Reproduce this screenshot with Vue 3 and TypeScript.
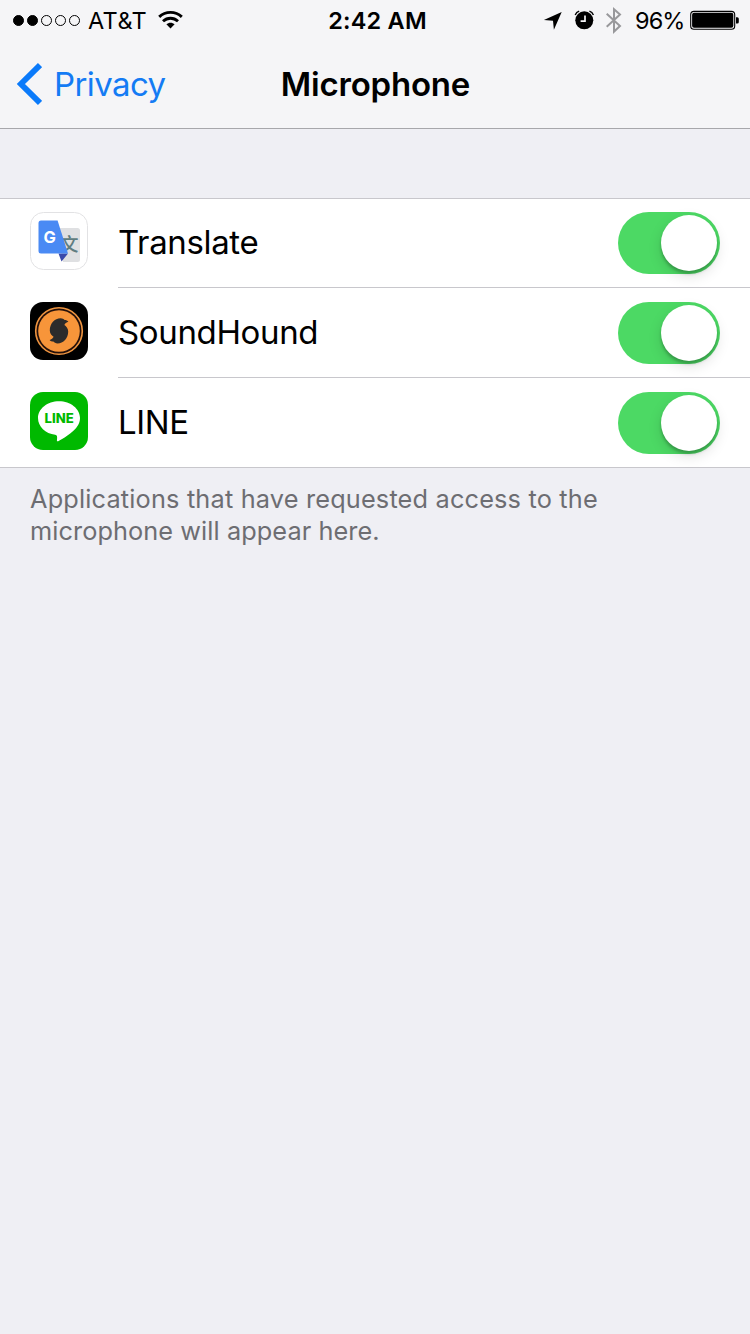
<script setup lang="ts">
import { ref } from 'vue'

type AppId = 'translate' | 'soundhound' | 'line'
interface AppEntry {
  id: AppId
  name: string
  enabled: boolean
}

const apps = ref<AppEntry[]>([
  { id: 'translate', name: 'Translate', enabled: true },
  { id: 'soundhound', name: 'SoundHound', enabled: true },
  { id: 'line', name: 'LINE', enabled: true },
])

const signalStrength = 2
</script>

<template>
  <div class="screen">
    <header class="top">
      <div class="status">
        <div class="status-left">
          <div class="signal">
            <i v-for="n in 5" :key="n" class="dot" :class="{ full: n <= signalStrength }"></i>
          </div>
          <span class="carrier">AT&amp;T</span>
          <svg class="wifi" width="26" height="20" viewBox="0 0 26 20">
            <g fill="none" stroke="#000" stroke-width="2.9">
              <path d="M2.2 6.9C8.5 .9 18.5 .9 24.8 6.9" />
              <path d="M6 11.2C10.4 7.2 16.6 7.2 21 11.2" />
            </g>
            <path d="M9.4 14.2C11.7 12.1 15.3 12.1 17.6 14.2L13.5 18.4Z" />
          </svg>
        </div>
        <div class="clock">2:42 AM</div>
        <div class="status-right">
          <svg class="location" width="19" height="19" viewBox="0 0 19 19">
            <path d="M18.7 .9L10.9 18.7L10 9.8L.9 8.9Z" />
          </svg>
          <svg class="alarm" width="20" height="20" viewBox="0 0 20 20">
            <circle cx="10.3" cy="10.3" r="9" />
            <path d="M1.2 4.9Q2.3 2.2 5.2 1.2M19.4 4.9Q18.3 2.2 15.4 1.2" fill="none" stroke="#000" stroke-width="1.4" />
            <path d="M11 5.5V11.2H6.6" fill="none" stroke="#f5f5f7" stroke-width="1.7" />
          </svg>
          <svg class="bluetooth" width="17" height="28" viewBox="0 0 17 28">
            <path d="M1.7 7.8L15 20L9 25.6V3.2L15 8.6L1.7 20.8" fill="none" stroke="#98989b" stroke-width="2" />
          </svg>
          <span class="percent">96%</span>
          <svg class="battery" width="50" height="20" viewBox="0 0 50 20">
            <rect x=".7" y="1.4" width="44" height="17.8" rx="3.3" fill="none" stroke="#000" stroke-width="1.1" />
            <rect x="2.1" y="2.8" width="41.2" height="15" rx="2" />
            <path d="M46 7.2H47.3Q48.8 7.2 48.8 8.8V11.9Q48.8 13.5 47.3 13.5H46Z" />
          </svg>
        </div>
      </div>
      <nav class="nav">
        <a class="back">
          <svg width="26" height="42" viewBox="0 0 26 42">
            <path d="M24 2.1L4.9 21L24 39.9" fill="none" stroke="#0a7afa" stroke-width="5.8" />
          </svg>
          <span class="back-label">Privacy</span>
        </a>
        <h1 class="title">Microphone</h1>
      </nav>
    </header>

    <main>
      <ul class="list">
        <li v-for="app in apps" :key="app.id" class="row">
          <svg v-if="app.id === 'translate'" class="icon" viewBox="0 0 58 58">
            <rect x=".5" y=".5" width="57" height="57" rx="13" fill="#fff" stroke="#e2e2e4" />
            <path d="M27 16H47.5Q50 16 50 18.5V47.5Q50 50 47.5 50H33Z" fill="#dfe0e2" />
            <text class="glyph-wen" x="30" y="38.6">文</text>
            <path d="M28.5 41.5H38L31.5 49.5Z" fill="#3949ab" />
            <path d="M11 8.5H27.6L38 41.5H11Q8.5 41.5 8.5 39V11Q8.5 8.5 11 8.5Z" fill="#4a8af4" />
            <text class="glyph-g" x="13.4" y="31.2">G</text>
          </svg>
          <svg v-else-if="app.id === 'soundhound'" class="icon" viewBox="0 0 58 58">
            <rect width="58" height="58" rx="13" />
            <circle cx="29" cy="29" r="23.3" fill="#24100a" stroke="#ee9440" stroke-width="1.6" />
            <circle cx="29" cy="29" r="20.8" fill="#f7953a" />
            <path d="M38.4 19.8C36.6 20.2 35 21.4 34.4 23C36 24.4 38.2 26 38.2 29.4C38.2 36.2 33.4 41.4 27.5 41.4C25.6 41.4 24.4 40.6 23.4 39.5C21.8 39.5 20.4 39 19.6 38C21.4 37.5 23 36.3 23.6 34.8C22 33.4 19.8 31.8 19.8 28.4C19.8 21.6 24.6 16.2 30.6 16.2C32.5 16.2 33.6 16.9 34.6 18C36.2 18 37.6 18.6 38.4 19.8Z" fill="#2b2b2b" />
          </svg>
          <svg v-else class="icon" viewBox="0 0 58 58">
            <rect width="58" height="58" rx="13" fill="#00b900" />
            <path d="M29 9.2C40.6 9.2 50 16.7 50 26C50 31.8 46.5 36.8 40.5 41.2C36.5 44.4 32 47.2 28.2 49.2C26.8 49.7 26.8 48.7 27 47.4C27.3 45 27.3 43.1 25.2 42.8C15.5 41.6 8 34.6 8 26C8 16.7 17.4 9.2 29 9.2Z" fill="#fff" />
            <text class="glyph-line" x="14.6" y="31.4" textLength="29.2" lengthAdjust="spacingAndGlyphs">LINE</text>
          </svg>
          <div class="cell">
            <span class="name">{{ app.name }}</span>
            <button
              class="switch"
              :class="{ on: app.enabled }"
              role="switch"
              :aria-checked="app.enabled"
              :aria-label="app.name"
              @click="app.enabled = !app.enabled"
            >
              <span class="knob"></span>
            </button>
          </div>
        </li>
      </ul>
      <p class="note">
        <span class="note-first">Applications that have requested access to the</span><br />
        <span class="note-second">microphone will appear here.</span>
      </p>
    </main>
  </div>
</template>

<style>
body {
  margin: 0;
  background: #efeff4;
}
</style>

<style scoped>
.screen {
  width: 750px;
  height: 1334px;
  background: #efeff4;
  font-family: Inter, "Liberation Sans", sans-serif;
  color: #000;
  overflow: hidden;
}
.top {
  background: #f5f5f7;
  border-bottom: 1px solid #a7a7ab;
}
.status {
  box-sizing: border-box;
  height: 40px;
  padding-top: 1px;
  display: grid;
  grid-template-columns: 1fr auto 1fr;
  align-items: center;
  font-size: 23.5px;
  line-height: 39px;
  white-space: nowrap;
}
.status svg {
  margin-bottom: 1px;
  overflow: visible;
}
.status-left {
  display: flex;
  align-items: center;
  padding-left: 13px;
}
.signal {
  display: flex;
  gap: 3px;
}
.dot {
  box-sizing: border-box;
  width: 11px;
  height: 11px;
  border: 1px solid #000;
  border-radius: 50%;
}
.dot.full {
  background: #000;
}
.carrier {
  width: 58px;
  margin-left: 8px;
  letter-spacing: 0.4px;
}
.wifi {
  margin-left: 11px;
}
.clock {
  font-weight: 600;
  letter-spacing: 0.2px;
  padding-left: 5px;
}
.status-right {
  display: flex;
  align-items: center;
  justify-content: flex-end;
  padding-right: 10px;
}
.alarm {
  margin-left: 12px;
}
.bluetooth {
  margin-left: 11px;
}
.percent {
  width: 49px;
  margin-left: 13px;
  letter-spacing: -0.9px;
}
.battery {
  margin-left: 6px;
}
.nav {
  height: 88px;
  display: grid;
  grid-template-columns: 1fr auto 1fr;
  align-items: center;
  font-size: 33px;
}
.back {
  display: flex;
  align-items: center;
  padding-left: 16px;
  color: #147bf4;
}
.back-label {
  margin-left: 12px;
  letter-spacing: -0.6px;
}
.title {
  margin: 0;
  padding-left: 1px;
  font-size: 33px;
  font-weight: 600;
  letter-spacing: -0.2px;
}
.list {
  list-style: none;
  margin: 69px 0 0;
  padding: 0;
  background: #fff;
  border-top: 1px solid #c8c7cc;
  border-bottom: 1px solid #c8c7cc;
}
.row {
  display: flex;
  box-sizing: border-box;
  height: 90px;
  padding-left: 30px;
}
.row:first-child,
.row:last-child {
  height: 89px;
}
.icon {
  width: 58px;
  height: 58px;
  margin-top: 14px;
  flex: none;
}
.row:first-child .icon {
  margin-top: 13px;
}
.cell {
  flex: 1;
  display: flex;
  justify-content: space-between;
  margin-left: 30px;
  padding: 14px 30px 0 0;
  border-bottom: 1px solid #c8c7cc;
}
.row:first-child .cell {
  padding-top: 13px;
}
.row:last-child .cell {
  border-bottom: 0;
}
.name {
  font-size: 33px;
  line-height: 60px;
  letter-spacing: -0.35px;
}
.switch {
  width: 102px;
  height: 62px;
  margin: 0;
  padding: 3px;
  border: 0;
  border-radius: 31px;
  background: #e5e5ea;
  display: flex;
}
.switch.on {
  background: #4cd964;
  justify-content: flex-end;
}
.knob {
  width: 56px;
  height: 56px;
  border-radius: 50%;
  background: #fff;
  box-shadow: 0 5px 14px rgba(0, 0, 0, 0.13), 0 3px 3px rgba(0, 0, 0, 0.22);
}
.note {
  margin: 0;
  padding: 15px 30px 0;
  font-size: 25.3px;
  line-height: 32px;
  color: #6d6d72;
  white-space: nowrap;
}
.note-first {
  letter-spacing: 0.18px;
}
.note-second {
  letter-spacing: 0.08px;
}
.glyph-wen {
  font: 500 18.5px "Noto Sans CJK SC", sans-serif;
  fill: #607d80;
}
.glyph-g {
  font: 700 16.5px Inter, sans-serif;
  fill: #fff;
}
.glyph-line {
  font: 800 12.8px Inter, sans-serif;
  fill: #00b900;
}
</style>
